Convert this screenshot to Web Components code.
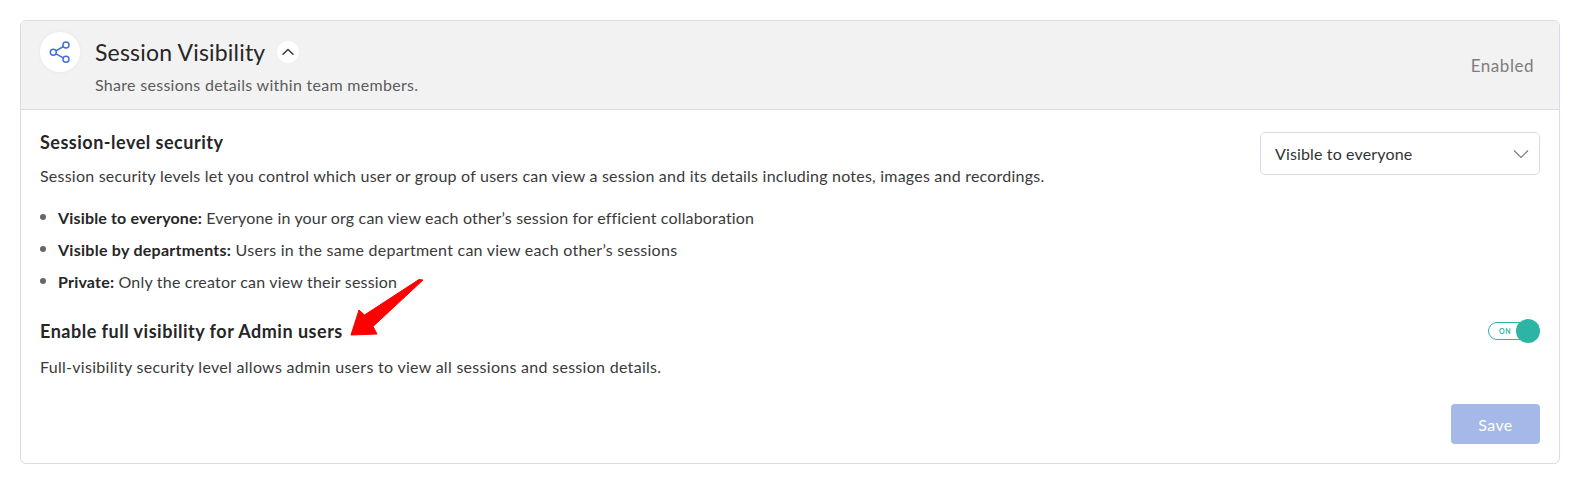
<!DOCTYPE html>
<html lang="en">
<head>
<meta charset="utf-8">
<title>Session Visibility</title>
<style>
  html, body { margin: 0; background: #fff; }
  body { padding: 20px; font-family: Lato, "Noto Sans", sans-serif; color: #2b2b2b; }
  .arrow { position: absolute; left: 345px; top: 274px; }
</style>
</head>
<body>

<template id="card-template">
  <style>
    :host { display: block; width: 1540px; height: 444px; box-sizing: border-box;
      border: 1px solid #d9dce8; border-radius: 6px; overflow: hidden; background: #fff; }
    header { display: flex; justify-content: space-between; height: 89px; box-sizing: border-box;
      padding: 11px 25px 0 19px; background: #f2f2f3; border-bottom: 1px solid #d9dce8; }
    .left { display: flex; gap: 15px; }
    .badge { width: 40px; height: 40px; border-radius: 50%; background: #fff; display: flex;
      align-items: center; justify-content: center; box-shadow: 0 0 4px rgba(0,0,0,.05); }
    .title { display: flex; align-items: center; gap: 12px; height: 39px; font-size: 23px; color: #262626; letter-spacing: .19px; }
    .toggle { width: 22px; height: 22px; border-radius: 50%; background: #fff; display: flex; align-items: center; justify-content: center; }
    .sub { font-size: 16px; color: #5c5c5c; margin-top: 4px; letter-spacing: .29px; line-height: 20px; }
    .status { font-size: 17px; color: #7d7d7d; margin-top: 22px; line-height: 24px; letter-spacing: .53px; }
    .body { padding: 0 19px; display: flex; flex-direction: column; }
  </style>
  <header>
    <div class="left">
      <div class="badge"><slot name="icon"></slot></div>
      <div>
        <div class="title"><span><slot name="title"></slot></span>
          <span class="toggle"><svg width="14" height="14" viewBox="0 0 14 14" fill="none" stroke="#333" stroke-width="1.4" stroke-linecap="round" stroke-linejoin="round"><path d="M2 9.300 7 4.500l5 4.800"/></svg></span>
        </div>
        <div class="sub"><slot name="subtitle"></slot></div>
      </div>
    </div>
    <div class="status"><slot name="status"></slot></div>
  </header>
  <div class="body"><slot></slot></div>
</template>

<template id="row-template">
  <style>
    :host { display: flex; justify-content: space-between; align-items: flex-start; }
    h3 { margin: 0; font-size: 18px; font-weight: 700; line-height: 24px; color: #262626; letter-spacing: .5px; }
    .desc { font-size: 16px; line-height: 22px; color: #3a3a3a; margin-top: var(--desc-gap, 11px); letter-spacing: .22px; }
  </style>
  <div class="text">
    <h3><slot name="heading"></slot></h3>
    <div class="desc"><slot name="desc"></slot></div>
    <slot name="extra"></slot>
  </div>
  <slot name="control"></slot>
</template>

<template id="select-template">
  <style>
    :host { display: flex; align-items: center; justify-content: space-between; width: 280px; height: 43px;
      box-sizing: border-box; border: 1px solid #d9dce8; border-radius: 5px; padding: 0 10px 0 14px;
      font-size: 16px; color: #333; letter-spacing: .14px; margin-top: 2px; }
  </style>
  <span><slot></slot></span>
  <svg width="16" height="10" viewBox="0 0 16 10" fill="none" stroke="#777" stroke-width="1.1"><path d="M1 1.500 8 8.500l7-7"/></svg>
</template>

<template id="switch-template">
  <style>
    :host { display: block; position: relative; width: 52px; height: 24px; }
    .track { position: absolute; left: 0; top: 3px; width: 44px; height: 18px; box-sizing: border-box;
      border: 1px solid #2cb5a5; border-radius: 9px; background: #fff; font-size: 7px; font-weight: 700;
      color: #2cb5a5; line-height: 16px; padding-left: 10px; letter-spacing: .5px; }
    .knob { position: absolute; right: 0; top: 0; width: 24px; height: 24px; border-radius: 50%; background: #2cb5a5; }
  </style>
  <div class="track">ON</div>
  <div class="knob"></div>
</template>

<template id="bullet-template">
  <style>
    :host { display: flex; align-items: center; gap: 12px; height: 32px; font-size: 16px; color: #3a3a3a; letter-spacing: .2px; }
    i { width: 6px; height: 6px; border-radius: 50%; background: #666; flex: none; }
    ::slotted(b) { color: #262626; font-weight: 700; }
  </style>
  <i></i><span><slot></slot></span>
</template>

<template id="button-template">
  <style>
    :host { display: flex; align-items: center; justify-content: center; width: 89px; height: 40px;
      border-radius: 4px; background: #a4b9e8; color: #fff; font-size: 16px; letter-spacing: .4px; }
  </style>
  <slot></slot>
</template>

<settings-card>
  <svg slot="icon" width="24" height="24" viewBox="0 0 24 24" fill="none" stroke="#3f72d8" stroke-width="1.500">
    <circle cx="5.300" cy="12.300" r="3"/><circle cx="18" cy="5" r="3"/><circle cx="18" cy="19.300" r="3"/>
    <path d="M7.900 10.800 15.400 6.500M7.900 13.800 15.400 17.800"/>
  </svg>
  <span slot="title">Session Visibility</span>
  <span slot="subtitle">Share sessions details within team members.</span>
  <span slot="status">Enabled</span>

  <setting-row style="margin-top:20px">
    <span slot="heading">Session-level security</span>
    <span slot="desc">Session security levels let you control which user or group of users can view a session and its details including notes, images and recordings.</span>
    <div slot="extra" style="margin-top:14px">
      <list-bullet style="letter-spacing:.16px"><b>Visible to everyone:</b> Everyone in your org can view each other’s session for efficient collaboration</list-bullet>
      <list-bullet style="letter-spacing:.26px"><b>Visible by departments:</b> Users in the same department can view each other’s sessions</list-bullet>
      <list-bullet><b>Private:</b> Only the creator can view their session</list-bullet>
    </div>
    <select-box slot="control">Visible to everyone</select-box>
  </setting-row>

  <setting-row style="margin-top:22px;--desc-gap:13px">
    <span slot="heading">Enable full visibility for Admin users</span>
    <span slot="desc"><span style="letter-spacing:.29px">Full-visibility security level allows admin users to view all sessions and session details.</span></span>
    <toggle-switch slot="control"></toggle-switch>
  </setting-row>

  <div style="display:flex;justify-content:flex-end;margin-top:26px"><save-button>Save</save-button></div>
</settings-card>

<svg class="arrow" width="84" height="66" viewBox="345 274 84 66">
  <path d="M351 335 359 310 364.500 315 419 279.500 423 280 373 326.500 377 334Z" fill="#fe0000" stroke="#fe0000" stroke-linejoin="round"/>
</svg>

<script>
  "use strict";
  function register(tag, templateId) {
    customElements.define(tag, class extends HTMLElement {
      constructor() {
        super();
        this.attachShadow({ mode: "open" });
        this.shadowRoot.appendChild(document.getElementById(templateId).content.cloneNode(true));
      }
    });
  }
  register("settings-card", "card-template");
  register("setting-row", "row-template");
  register("select-box", "select-template");
  register("toggle-switch", "switch-template");
  register("list-bullet", "bullet-template");
  register("save-button", "button-template");
</script>
</body>
</html>
